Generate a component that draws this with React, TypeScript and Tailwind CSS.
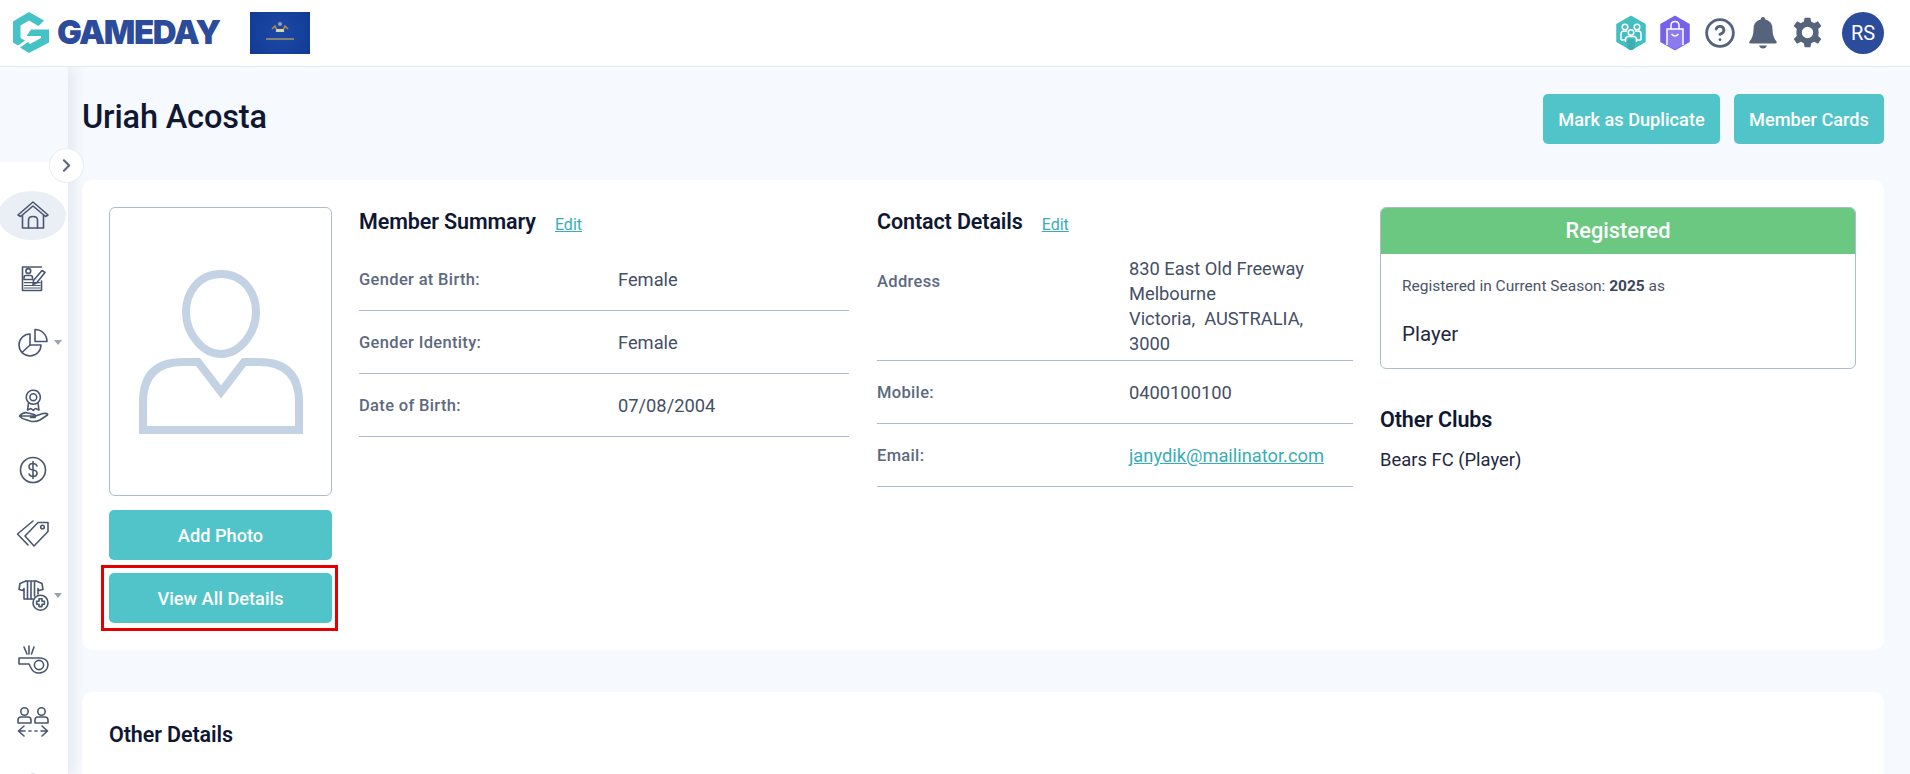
import { ChevronRight, CircleHelp } from "lucide-react";
import type { ReactNode } from "react";

const ink = "#4a5670";

function Logo() {
  return (
    <div className="flex items-center gap-[8px]">
      <svg width="36" height="41" viewBox="0 0 36 41" fill="#44c2c5">
        <path d="M16 0 L31 8.5 L25.5 14 L16 8.5 L7.5 13.5 V26 L12 28.5 L5 33.5 L0 30.5 V9.5 Z" />
        <path d="M18 17.5 H36 V30.5 L16 41 L7 35.5 L15 30 L17 32 L28 26 V24 H13.5 Z" />
      </svg>
      <span className="font-['Inter',sans-serif] text-[33px] leading-none font-black tracking-[-0.045em] text-[#2c4b9b]">
        GAMEDAY
      </span>
    </div>
  );
}

function Flag() {
  return (
    <div className="ml-[30px] flex h-[42px] w-[60px] items-center justify-center bg-[radial-gradient(circle,#1c4aa8,#123a92)]">
      <svg width="60" height="42" viewBox="0 0 60 42" fill="none">
        <circle cx="30" cy="12" r="2" fill="#8fa0c8" />
        <path d="M22 17 L25 14 L27 18 M38 17 L35 14 L33 18" stroke="#b48b3c" strokeWidth="1.5" />
        <rect x="26" y="17" width="8" height="3" fill="#d8d2a8" />
        <path d="M16 27 H44" stroke="#b89a62" strokeWidth="1.4" />
      </svg>
    </div>
  );
}

function HeaderIcons() {
  return (
    <div className="flex items-center">
      <svg width="30" height="36" viewBox="0 0 30 36">
        <path d="M15 1.5 L29 9.5 L29 26.5 L15 34.5 L1 26.5 L1 9.5 Z" fill="#44bfc1" stroke="#44bfc1" strokeWidth="1.5" strokeLinejoin="round" />
        <g fill="none" stroke="#fff" strokeWidth="1.5">
          <circle cx="9" cy="12" r="2.8" />
          <circle cx="21" cy="12" r="2.8" />
          <path d="M5 25 V19 Q5 16 8 16 H11 M25 25 V19 Q25 16 22 16 H19" />
          <path d="M5 25 H9 M25 25 H21" />
          <circle cx="15" cy="17.5" r="2.8" />
          <path d="M9.5 27 V24.5 Q9.5 21.5 12.5 21.5 H17.5 Q20.5 21.5 20.5 24.5 V27" />
        </g>
        <rect x="11" y="24" width="8" height="11" rx="4" fill="#3eaeb2" />
      </svg>
      <svg className="ml-[14px]" width="30" height="36" viewBox="0 0 30 36">
        <path d="M15 1.5 L29 9.5 L29 26.5 L15 34.5 L1 26.5 L1 9.5 Z" fill="#7661ec" stroke="#7661ec" strokeWidth="1.5" strokeLinejoin="round" />
        <path d="M7 14 H23 V30 L15 34.5 L7 30 Z" fill="#8c7bf0" />
        <g fill="none" stroke="#fff" strokeWidth="1.5">
          <path d="M7 30 V14 H23 V30" />
          <path d="M11 14 V10.5 Q11 6.5 15 6.5 Q19 6.5 19 10.5 V14" />
          <path d="M11.5 19 Q15 23 18.5 19" />
        </g>
      </svg>
      <CircleHelp className="ml-[14px] text-[#56637d]" size={32} strokeWidth={2.1} />
      <svg className="ml-[13px]" width="28" height="32" viewBox="0 0 28 32" fill="#56637d">
        <path d="M14 0 Q16.3 0 16.3 2.6 Q23.5 4.2 23.5 12.5 Q23.5 20 27.5 24.5 Q28.5 26.5 26 26.5 H2 Q-.5 26.5 .5 24.5 Q4.5 20 4.5 12.5 Q4.5 4.2 11.7 2.6 Q11.7 0 14 0 Z" />
        <path d="M10 28.5 H18 Q17 31.5 14 31.5 Q11 31.5 10 28.5 Z" />
      </svg>
      <svg className="ml-[15px]" width="31" height="31" viewBox="0 0 24 24" fill="#56637d">
        <path
          fillRule="evenodd"
          d="M9.8 0.5 H14.2 L14.9 3.7 Q16.1 4.1 17.1 4.8 L20.1 3.3 L22.7 6.9 L20.3 9.2 Q20.6 10.5 20.6 12 Q20.6 13.4 20.3 14.8 L22.7 17.1 L20.1 20.7 L17.1 19.2 Q16.1 19.9 14.9 20.3 L14.2 23.5 H9.8 L9.1 20.3 Q7.9 19.9 6.9 19.2 L3.9 20.7 L1.3 17.1 L3.7 14.8 Q3.4 13.4 3.4 12 Q3.4 10.5 3.7 9.2 L1.3 6.9 L3.9 3.3 L6.9 4.8 Q7.9 4.1 9.1 3.7 Z M12 7.6 A4.4 4.4 0 1 0 12 16.4 A4.4 4.4 0 1 0 12 7.6 Z"
        />
      </svg>
      <div className="ml-[19px] flex h-[42px] w-[42px] items-center justify-center rounded-full bg-[#2b4b9b] font-['Roboto',sans-serif] text-[20px] text-white">
        RS
      </div>
    </div>
  );
}

function NavIcon({ children }: { children: ReactNode }) {
  return (
    <svg className="overflow-visible" width="36" height="36" viewBox="0 0 36 36" fill="none" stroke={ink} strokeWidth="1.6" strokeLinejoin="round" strokeLinecap="round">
      {children}
    </svg>
  );
}

const navItems: { key: string; height: number; caret?: boolean; active?: boolean; icon: ReactNode }[] = [
  {
    key: "home",
    height: 63,
    active: true,
    icon: (
      <>
        <path d="M3 18 L18 5 L33 18 L30.5 19.5 L18 9 L5.5 19.5 Z" />
        <path d="M7.5 18.5 V31 H28.5 V18.5" />
        <path d="M13.5 31 V23 Q13.5 19.5 18 19.5 Q22.5 19.5 22.5 23 V31" />
      </>
    ),
  },
  {
    key: "form",
    height: 64,
    icon: (
      <>
        <path d="M26.5 7 H7.5 V30.5 H26.5 V21" />
        <circle cx="13.3" cy="11" r="2.4" />
        <path d="M9 19.5 V17.5 Q9 15.5 11 15.5 H15.5 Q17.5 15.5 17.5 17.5 V19.5 Z" />
        <path d="M9.5 22.7 H25 M9.5 25.5 H25 M9.5 28 H25" strokeWidth="1.2" />
        <path d="M18.5 20.5 L27 10.5 L30 12.5 L21.5 23 L18 24.5 Z" />
      </>
    ),
  },
  {
    key: "pie",
    height: 64,
    caret: true,
    icon: (
      <>
        <path d="M15 10 V21 H26 A11 11 0 1 1 15 10 Z" />
        <path d="M15 21 L7 28.5" />
        <path d="M20 5.5 A12 12 0 0 1 32 17.5 H20 Z" />
      </>
    ),
  },
  {
    key: "award",
    height: 64,
    icon: (
      <>
        <circle cx="18.3" cy="9.2" r="7" strokeDasharray="2.6 0.6" />
        <circle cx="18.3" cy="9.2" r="3.4" />
        <path d="M13.5 15 L12.5 22 L16 20.5 L18.3 22.5 L20.5 20.5 L24 22 L23 15" />
        <path d="M4.5 28 Q8.5 23.5 13 25 L19 26.5 Q22 27.5 20 29.5 H15.5 M20.5 28 L28 25.5 Q33.5 25 32.5 27 L25 32 Q20 34.5 15 33 L10.5 31.5 Q7 31 4.5 28 Z" />
      </>
    ),
  },
  {
    key: "dollar",
    height: 63,
    icon: (
      <>
        <circle cx="18" cy="18" r="12.5" />
        <path d="M22 14 Q21 11.5 18 11.5 Q14 11.5 14 14.7 Q14 17.5 18 18 Q22 18.5 22 21.3 Q22 24.5 18 24.5 Q15 24.5 14 22 M18 9.5 V26.5" />
      </>
    ),
  },
  {
    key: "tag",
    height: 62,
    icon: (
      <>
        <path d="M23 7.5 H33 V16.5 L19 31 L10 21 Z" />
        <path d="M18 6 L2.5 19 L13 30" />
        <circle cx="27.5" cy="12" r="1.8" />
      </>
    ),
  },
  {
    key: "shirt",
    height: 64,
    caret: true,
    icon: (
      <>
        <path d="M11 4 L5 6.5 L4 12.5 L8 13.5 L9 11.5 V22 H18 M21 4 L27 6.5 L28 12.5 L24 13.5 L23 11.5 V17" />
        <path d="M11 4 H21 M12.5 4.5 V22 M16 4.5 V22 M19.5 4.5 V19" />
        <circle cx="25.5" cy="25.7" r="7.5" />
        <path d="M24 21.8 H27 V24.2 H29.4 V27.2 H27 V29.6 H24 V27.2 H21.6 V24.2 H24 Z" />
      </>
    ),
  },
  {
    key: "whistle",
    height: 64,
    icon: (
      <>
        <path d="M9 6 L12 13 M14 5 V13 M19 6 L16.5 13" />
        <path d="M4 17 H26 Q33 18 33 24 A9 9 0 0 1 16 27 L14 23 H4 Z" />
        <circle cx="24" cy="24" r="4.6" />
      </>
    ),
  },
  {
    key: "people",
    height: 64,
    icon: (
      <>
        <circle cx="9.5" cy="6.5" r="3.7" />
        <circle cx="26.5" cy="6.5" r="3.7" />
        <path d="M3 18 V15 Q3 12 6 12 H13 Q16 12 16 15 V18 Z" />
        <path d="M20 18 V15 Q20 12 23 12 H30 Q33 12 33 15 V18 Z" />
        <path d="M3.5 26 H10 M14 26 H16 M20 26 H22 M26 26 H32.5 M9 21 L3.5 26 L9 31 M27 21 L32.5 26 L27 31" />
      </>
    ),
  },
  {
    key: "more",
    height: 64,
    icon: <circle cx="18" cy="18" r="12.5" />,
  },
];

function Sidebar() {
  return (
    <aside className="relative z-10 flex w-[68px] shrink-0 flex-col shadow-[5px_0_12px_rgba(70,90,130,0.1)]">
      <div className="h-[95px] shrink-0 bg-[#f6f9fd]" />
      <div className="absolute top-[81px] left-[49px] z-20 flex h-[35px] w-[35px] items-center justify-center rounded-full border border-[#e8ecf2] bg-white text-[#5b6780]">
        <ChevronRight size={21} strokeWidth={2.4} />
      </div>
      <nav className="flex flex-1 flex-col bg-white pt-[35px]">
        {navItems.map((item) => (
          <div key={item.key} className="relative w-full shrink-0 pl-[15px]" style={{ height: item.height }}>
            {item.active ? <div className="absolute top-[-6px] left-[-2px] h-[49px] w-[68px] rounded-[50%] bg-[#e9eff4]" /> : null}
            <div className="relative">
              <NavIcon>{item.icon}</NavIcon>
            </div>
            {item.caret ? (
              <div className="absolute top-[16px] left-[54px] h-0 w-0 border-x-[4px] border-t-[5px] border-x-transparent border-t-[#98a3b5]" />
            ) : null}
          </div>
        ))}
      </nav>
    </aside>
  );
}

function TealButton({ children, className }: { children: ReactNode; className?: string }) {
  return (
    <button
      type="button"
      className={`flex h-[50px] items-center justify-center rounded-[5px] bg-[#50c4c8] pt-[1px] text-[18.2px] font-medium text-white ${className ?? ""}`}
    >
      {children}
    </button>
  );
}

function PhotoColumn() {
  return (
    <div className="w-[223px] shrink-0">
      <div className="flex h-[289px] items-center justify-center rounded-[6px] border border-[#b0bccd]">
        <svg className="blur-[0.5px]" width="164" height="164" viewBox="0 0 164 164" fill="none" stroke="#c4d3e3" strokeWidth="8">
          <path d="M82 4 C104 4 117 22 117 42 C117 64 100 84 82 84 C64 84 47 64 47 42 C47 22 60 4 82 4 Z" />
          <path d="M4 160 V132 Q4 92 44 92 H59 L82 122 L105 92 H120 Q160 92 160 132 V160 Z" />
        </svg>
      </div>
      <TealButton className="mt-[14px] w-full">Add Photo</TealButton>
      <div className="relative mt-[13px]">
        <TealButton className="w-full">View All Details</TealButton>
        <div className="absolute top-[-8px] right-[-6px] bottom-[-8px] left-[-8px] border-[3px] border-[#e30000]" />
      </div>
    </div>
  );
}

function SectionHeading({ title }: { title: string }) {
  return (
    <div className="flex h-[30px] items-center">
      <h2 className="text-[21.5px] font-semibold tracking-[-0.005em] text-[#0f1733]">{title}</h2>
      <a href="#" className="mt-[5px] ml-[19px] text-[16px] text-[#37adb5] underline">
        Edit
      </a>
    </div>
  );
}

function InfoRow({ label, children, valueX }: { label: string; children: ReactNode; valueX: number }) {
  return (
    <div className="flex h-[63px] items-center border-b border-[#aebccd] pt-[2px]">
      <div className="shrink-0 text-[16.5px] font-medium tracking-[0.02em] text-[#5d6980]" style={{ width: valueX }}>
        {label}
      </div>
      <div className="text-[18.3px] text-[#454f66]">{children}</div>
    </div>
  );
}

function MemberSummary() {
  return (
    <section className="ml-[27px] w-[490px] shrink-0">
      <SectionHeading title="Member Summary" />
      <div className="mt-[11px]">
        <InfoRow label="Gender at Birth:" valueX={259}>
          Female
        </InfoRow>
        <InfoRow label="Gender Identity:" valueX={259}>
          Female
        </InfoRow>
        <InfoRow label="Date of Birth:" valueX={259}>
          07/08/2004
        </InfoRow>
      </div>
    </section>
  );
}

function ContactDetails() {
  return (
    <section className="ml-[28px] w-[476px] shrink-0">
      <SectionHeading title="Contact Details" />
      <div className="mt-[18px]">
        <div className="flex border-b border-[#aebccd] pt-[1px] pb-[4px]">
          <div className="w-[252px] shrink-0 pt-[14px] text-[16.5px] font-medium tracking-[0.02em] text-[#5d6980]">Address</div>
          <div className="text-[18.3px] leading-[25px] text-[#454f66]">
            830 East Old Freeway
            <br />
            Melbourne
            <br />
            Victoria,&nbsp; AUSTRALIA,
            <br />
            3000
          </div>
        </div>
        <InfoRow label="Mobile:" valueX={252}>
          0400100100
        </InfoRow>
        <InfoRow label="Email:" valueX={252}>
          <a href="#" className="text-[#37adb5] underline">
            janydik@mailinator.com
          </a>
        </InfoRow>
      </div>
    </section>
  );
}

function RegistrationColumn() {
  return (
    <section className="ml-[27px] w-[476px] shrink-0">
      <div className="h-[162px] overflow-hidden rounded-[6px] border border-[#aebccd]">
        <div className="mx-[-1px] mt-[-1px] flex h-[47px] items-center justify-center bg-[#6bc881] pt-[2px] text-[21.8px] font-medium text-white">
          Registered
        </div>
        <div className="px-[21px] pt-[21px]">
          <p className="text-[15.5px] text-[#4a5468]">
            Registered in Current Season: <strong className="font-bold text-[#3c465b]">2025</strong> as
          </p>
          <p className="mt-[21px] text-[20.5px] text-[#1f2740]">Player</p>
        </div>
      </div>
      <h2 className="mt-[35px] text-[21.5px] font-semibold tracking-[-0.005em] text-[#0f1733]">Other Clubs</h2>
      <p className="mt-[10px] text-[18.4px] text-[#1f2740]">Bears FC (Player)</p>
    </section>
  );
}

export default function App() {
  return (
    <div className="flex h-[774px] w-[1910px] flex-col overflow-hidden bg-[#f6f9fd] font-['Roboto',sans-serif]">
      <header className="relative z-20 flex h-[67px] shrink-0 items-center justify-between border-b border-[#e6eaf1] bg-white pr-[26px] pb-[1px] pl-[13px]">
        <div className="flex items-center">
          <Logo />
          <Flag />
        </div>
        <HeaderIcons />
      </header>

      <div className="flex min-h-0 flex-1">
        <Sidebar />
        <main className="min-w-0 flex-1 pr-[26px] pl-[14px]">
          <div className="flex h-[113px] items-start justify-between pt-[27px]">
            <h1 className="mt-[3px] text-[32.5px] leading-[40px] font-medium tracking-[-0.005em] text-[#0f1733]">Uriah Acosta</h1>
            <div className="flex gap-[14px]">
              <TealButton className="w-[177px]">Mark as Duplicate</TealButton>
              <TealButton className="w-[150px]">Member Cards</TealButton>
            </div>
          </div>

          <div className="flex h-[470px] rounded-[10px] bg-white pt-[27px] pl-[27px]">
            <PhotoColumn />
            <MemberSummary />
            <ContactDetails />
            <RegistrationColumn />
          </div>

          <div className="mt-[42px] h-[200px] rounded-[10px] bg-white pt-[27px] pl-[27px]">
            <h2 className="text-[21.5px] font-semibold tracking-[-0.005em] text-[#0f1733]">Other Details</h2>
          </div>
        </main>
      </div>
    </div>
  );
}
